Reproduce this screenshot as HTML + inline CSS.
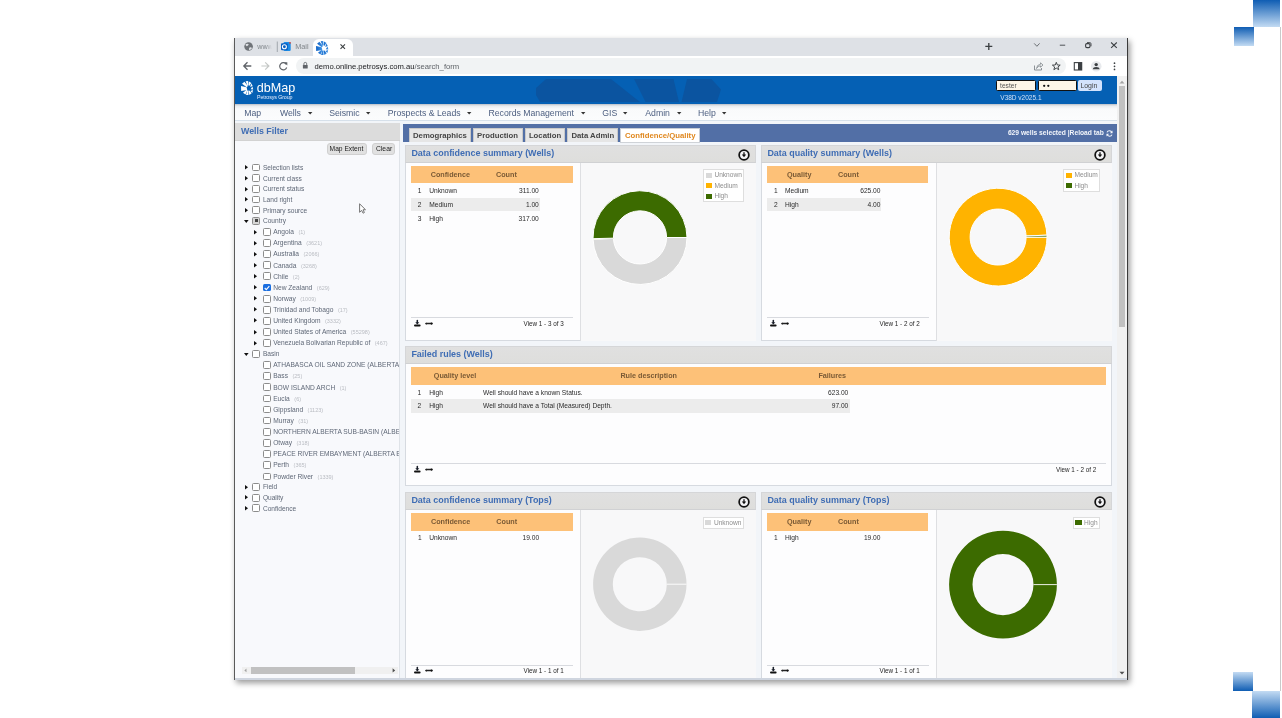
<!DOCTYPE html>
<html><head><meta charset="utf-8"><title>dbMap</title>
<style>
html,body{margin:0;padding:0;}
body{width:1282px;height:718px;overflow:hidden;position:relative;background:#fff;font-family:"Liberation Sans",sans-serif;}
.a{position:absolute;box-sizing:border-box;}
.t{white-space:nowrap;}
svg{position:absolute;overflow:visible;}
</style></head><body><div style="position:absolute;left:0;top:0;width:1282px;height:718px;overflow:hidden;will-change:transform;">

<div class="a" style="left:1253px;top:0px;width:27px;height:27px;background:linear-gradient(#0f5db3,#c3dbf3);"></div>
<div class="a" style="left:1234px;top:27px;width:20px;height:19px;background:linear-gradient(#0f5db3,#c3dbf3);"></div>
<div class="a" style="left:1233px;top:672px;width:20px;height:19px;background:linear-gradient(#c3dbf3,#0f5db3);"></div>
<div class="a" style="left:1252px;top:691px;width:28px;height:27px;background:linear-gradient(#c3dbf3,#0f5db3);"></div>
<div class="a" style="left:1280px;top:27px;width:1px;height:664px;background:#c9c9c9;"></div>
<div class="a" style="left:234px;top:38px;width:894px;height:642px;box-shadow:2px 3px 6px rgba(0,0,0,0.4);background:#f4f7fa;"></div>
<div class="a" style="left:235px;top:38px;width:892px;height:18px;background:#dee1e6;"></div>
<div class="a" style="left:313px;top:39px;width:40px;height:17px;background:#fff;border-radius:6px 6px 0 0;"></div>
<div class="a" style="left:235px;top:56px;width:892px;height:20px;background:#fff;"></div>
<div class="a" style="left:296px;top:57.7px;width:770px;height:15.9px;background:#f1f3f4;border-radius:8px;"></div>
<div class="a" style="left:234px;top:38px;width:1px;height:642px;background:#5a5a5a;"></div>
<div class="a" style="left:1127px;top:38px;width:1.3px;height:642px;background:#3a3a3a;"></div>
<div class="a" style="left:235px;top:76px;width:882px;height:28px;background:#0560b4;"></div>
<svg style="left:0;top:0" width="1282" height="718"><g fill="#0b54a0"><path d="M546 79 L611 79 L640 102 L540 102 L536 95 L536 88 Z"/><path d="M634 79 L673.5 79 L679 102 L645.5 102 Z"/><path d="M687 79 L711.5 79 L721 89.5 L717 102 L681.5 102 Z"/></g></svg>
<div class="a" style="left:235px;top:104px;width:882px;height:17px;background:linear-gradient(#b9bec6,#e9ecef 2px,#f9fafb 5px,#fbfcfd);border-bottom:1px solid #d6e0ea;"></div>
<div class="a" style="left:1117px;top:76px;width:10px;height:604px;background:#f1f1f1;"></div>
<div class="a" style="left:1119px;top:86px;width:6px;height:241px;background:#c1c1c1;"></div>
<svg style="left:0;top:0" width="1282" height="718"><circle cx="248.6" cy="46.5" r="4.3" fill="#6f7378"/><path d="M245.5 44.3 Q247.5 43.2 248.8 44.6 Q248.2 46 246.8 46.2 Q245.6 45.6 245.5 44.3Z M249.5 47.5 Q251.5 47 252 48.3 Q250.8 50.2 249 50 Q248.6 48.5 249.5 47.5Z" fill="#dfe1e5"/><rect x="276.8" y="41.5" width="0.9" height="10.5" fill="#9aa0a6"/><rect x="283.5" y="42" width="7.2" height="9" rx="1.2" fill="#1c8ce6"/><rect x="281" y="43.3" width="6.8" height="7" rx="1" fill="#0a5fc2"/><circle cx="284.4" cy="46.8" r="2" fill="none" stroke="#fff" stroke-width="1.1"/><circle cx="290" cy="42.8" r="0.9" fill="#e0463a"/><path d="M340.5 44.3 L345 48.8 M345 44.3 L340.5 48.8" stroke="#3c4043" stroke-width="1.1"/><path d="M985.3 46.4 L992.3 46.4 M988.8 42.9 L988.8 49.9" stroke="#3c4043" stroke-width="1.35"/><path d="M1034.2 43.4 L1036.9 46.3 L1039.6 43.4" fill="none" stroke="#5f6368" stroke-width="0.9"/><path d="M1059.8 45.2 L1065.2 45.2" stroke="#4f5358" stroke-width="1"/><rect x="1085.6" y="43.6" width="4.4" height="4" rx="1.3" fill="none" stroke="#3c4043" stroke-width="1.1"/><path d="M1087 42.6 L1089.8 42.6 Q1091 42.6 1091 43.8 L1091 46.3" fill="none" stroke="#3c4043" stroke-width="0.9"/><path d="M1111.1 42.5 L1116.8 47.8 M1116.8 42.5 L1111.1 47.8" stroke="#3c4043" stroke-width="1.05"/><path d="M251.3 66 L244 66 M247.5 62.3 L243.8 66 L247.5 69.7" fill="none" stroke="#5f6368" stroke-width="1.3"/><path d="M261.4 66 L268.7 66 M265.2 62.3 L268.9 66 L265.2 69.7" fill="none" stroke="#c4c7c5" stroke-width="1.2"/><path d="M286.3 64.3 A3.6 3.6 0 1 0 286.7 67.5" fill="none" stroke="#5f6368" stroke-width="1.2"/><path d="M284 62.2 L287.3 62.2 L287.3 65.5 Z" fill="#5f6368"/><rect x="302.9" y="64.9" width="4.8" height="3.7" rx="0.5" fill="#5f6368"/><path d="M303.9 65.1 L303.9 63.8 A1.4 1.4 0 0 1 306.7 63.8 L306.7 65.1" fill="none" stroke="#5f6368" stroke-width="0.85"/><path d="M1034.5 65.5 L1034.5 70 L1041.5 70 L1041.5 68" fill="none" stroke="#80868b" stroke-width="0.9"/><path d="M1036.5 68.5 Q1037 64.5 1040.5 64.3 L1040.5 62.8 L1043 65 L1040.5 67.2 L1040.5 65.8 Q1038 65.8 1036.5 68.5Z" fill="none" stroke="#80868b" stroke-width="0.8"/><path d="M1056.30 62.30 L1057.33 64.98 L1060.20 65.13 L1057.96 66.94 L1058.71 69.72 L1056.30 68.15 L1053.89 69.72 L1054.64 66.94 L1052.40 65.13 L1055.27 64.98 Z" fill="none" stroke="#3c4043" stroke-width="0.95" stroke-linejoin="round"/><rect x="1074.3" y="62.6" width="7.4" height="7.4" fill="none" stroke="#3c4043" stroke-width="1.1"/><rect x="1078" y="62.6" width="4" height="7.4" fill="#3c4043"/><circle cx="1096.2" cy="66.3" r="5.3" fill="#e8eaed"/><circle cx="1096.2" cy="64.6" r="1.7" fill="#3c4043"/><path d="M1092.8 69.3 Q1093.2 66.9 1096.2 66.9 Q1099.2 66.9 1099.6 69.3 Z" fill="#3c4043"/><circle cx="1114.5" cy="63.2" r="0.85" fill="#3c4043"/><circle cx="1114.5" cy="66.3" r="0.85" fill="#3c4043"/><circle cx="1114.5" cy="69.4" r="0.85" fill="#3c4043"/></svg>
<svg style="left:316.4px;top:41px" width="12.7" height="14" viewBox="0 0 14 14" preserveAspectRatio="none"><defs><linearGradient id="fg" x1="0" y1="0" x2="1" y2="0"><stop offset="0" stop-color="#0b5fc4"/><stop offset="1" stop-color="#4a9be8"/></linearGradient></defs><g fill="url(#fg)"><path d="M1.2 2.8 L3.8 0.8 L7.8 5 L6.3 6.2 Z"/><path d="M5.2 0.3 L8 0 L8.5 4.3 L7.2 4.5 Z"/><path d="M9 0.6 L11.6 1.9 L9.1 5.1 L8.6 4.6 Z"/><path d="M0 5.1 L6.3 6.2 L7 9.1 L0.2 10 Z"/><path d="M11.4 2.5 L13.1 4.9 L10.3 6.1 Z"/><path d="M12.8 5.6 L13.7 8.4 L10.8 8.2 Z"/><path d="M13.4 9 L12.7 11.9 L10.5 10 Z"/><path d="M11.9 12.3 L9.4 14 L8.2 9.8 L9.4 9.4 Z"/><path d="M8.4 14 L5.7 13.9 L7 9.4 L8.1 9.6 Z"/><path d="M5 13.6 L2.2 11.8 L6.3 8.8 L7.1 9.6 Z"/></g></svg>
<div class="a t " style="left:257.2px;top:42.00px;line-height:10px;font-size:7.2px;color:#80868b;-webkit-mask-image:linear-gradient(90deg,#000 60%,transparent);width:15px;overflow:hidden;">www</div>
<div class="a t " style="left:295.2px;top:41.80px;line-height:10px;font-size:7.3px;color:#80868b;">Mail</div>
<div class="a t " style="left:314.5px;top:61.60px;line-height:10px;font-size:7.66px;color:#333;"><span style="color:#202124">demo.online.petrosys.com.au</span><span style="color:#5f6368">/search_form</span></div>
<svg style="left:240.5px;top:80.6px" width="12.5" height="14" viewBox="0 0 14 14" preserveAspectRatio="none"><g fill="#fff"><path d="M1.2 2.8 L3.8 0.8 L7.8 5 L6.3 6.2 Z"/><path d="M5.2 0.3 L8 0 L8.5 4.3 L7.2 4.5 Z"/><path d="M9 0.6 L11.6 1.9 L9.1 5.1 L8.6 4.6 Z"/><path d="M0 5.1 L6.3 6.2 L7 9.1 L0.2 10 Z"/><path d="M11.4 2.5 L13.1 4.9 L10.3 6.1 Z"/><path d="M12.8 5.6 L13.7 8.4 L10.8 8.2 Z"/><path d="M13.4 9 L12.7 11.9 L10.5 10 Z"/><path d="M11.9 12.3 L9.4 14 L8.2 9.8 L9.4 9.4 Z"/><path d="M8.4 14 L5.7 13.9 L7 9.4 L8.1 9.6 Z"/><path d="M5 13.6 L2.2 11.8 L6.3 8.8 L7.1 9.6 Z"/></g></svg>
<div class="a t " style="left:256.8px;top:81.00px;line-height:14px;font-size:12.6px;color:#fff;">dbMap</div>
<div class="a t " style="left:257px;top:93.50px;line-height:6px;font-size:5.3px;color:#e6efff;letter-spacing:-0.1px;">Petrosys Group</div>
<div class="a" style="left:996px;top:80px;width:39.5px;height:11.3px;background:#fdf6e8;border:1px solid #111;border-radius:1.5px;"></div>
<div class="a" style="left:1038px;top:80px;width:38.7px;height:11.3px;background:#fdf6e8;border:1px solid #111;border-radius:1.5px;"></div>
<div class="a" style="left:1078px;top:80px;width:24.3px;height:11.4px;background:#d3e3fd;border-radius:2px;"></div>
<div class="a t " style="left:1000.1px;top:80.60px;line-height:10px;font-size:6.6px;color:#555;">tester</div>
<svg style="left:0;top:0" width="1282" height="718"><circle cx="1044.2" cy="85.8" r="1.15" fill="#111"/><circle cx="1048.3" cy="85.8" r="1.15" fill="#111"/></svg>
<div class="a t " style="left:1080.4px;top:81.00px;line-height:10px;font-size:6.9px;color:#444;">Login</div>
<div class="a t " style="left:1000.3px;top:94.00px;line-height:8px;font-size:6.5px;color:#cfe0f7;">V38D v2025.1</div>
<div class="a t " style="left:244.2px;top:106.60px;line-height:12px;font-size:8.7px;color:#4d5f80;">Map</div>
<div class="a t " style="left:279.9px;top:106.60px;line-height:12px;font-size:8.7px;color:#4d5f80;">Wells</div>
<svg style="left:307.5px;top:111.6px" width="5" height="3"><path d="M0 0 L4.4 0 L2.2 2.6 Z" fill="#333"/></svg>
<div class="a t " style="left:329.2px;top:106.60px;line-height:12px;font-size:8.7px;color:#4d5f80;">Seismic</div>
<svg style="left:366.40000000000003px;top:111.6px" width="5" height="3"><path d="M0 0 L4.4 0 L2.2 2.6 Z" fill="#333"/></svg>
<div class="a t " style="left:387.7px;top:106.60px;line-height:12px;font-size:8.7px;color:#4d5f80;">Prospects &amp; Leads</div>
<svg style="left:466.8px;top:111.6px" width="5" height="3"><path d="M0 0 L4.4 0 L2.2 2.6 Z" fill="#333"/></svg>
<div class="a t " style="left:488.5px;top:106.60px;line-height:12px;font-size:8.7px;color:#4d5f80;">Records Management</div>
<svg style="left:581.1999999999999px;top:111.6px" width="5" height="3"><path d="M0 0 L4.4 0 L2.2 2.6 Z" fill="#333"/></svg>
<div class="a t " style="left:602.3px;top:106.60px;line-height:12px;font-size:8.7px;color:#4d5f80;">GIS</div>
<svg style="left:623.4px;top:111.6px" width="5" height="3"><path d="M0 0 L4.4 0 L2.2 2.6 Z" fill="#333"/></svg>
<div class="a t " style="left:645.3px;top:106.60px;line-height:12px;font-size:8.7px;color:#4d5f80;">Admin</div>
<svg style="left:676.5999999999999px;top:111.6px" width="5" height="3"><path d="M0 0 L4.4 0 L2.2 2.6 Z" fill="#333"/></svg>
<div class="a t " style="left:698px;top:106.60px;line-height:12px;font-size:8.7px;color:#4d5f80;">Help</div>
<svg style="left:722.1999999999999px;top:111.6px" width="5" height="3"><path d="M0 0 L4.4 0 L2.2 2.6 Z" fill="#333"/></svg>
<div class="a" style="left:235px;top:121px;width:882px;height:559px;background:#f2f5f9;"></div>
<div class="a" style="left:235px;top:123px;width:165px;height:555px;background:#f8f9fc;border-right:1px solid #dfe3e8;"></div>
<div class="a" style="left:235px;top:123px;width:165px;height:18px;background:#dcdcdc;border-bottom:1px solid #d2d2d2;"></div>
<div class="a t " style="left:241px;top:125.20px;line-height:12px;font-size:8.84px;color:#3f6db4;font-weight:bold;">Wells Filter</div>
<div class="a" style="left:326.8px;top:143.4px;width:40px;height:11.3px;background:#e1e1e1;border:1px solid #d0d0d0;border-radius:3px;"></div>
<div class="a" style="left:372.3px;top:143.4px;width:22.5px;height:11.3px;background:#e1e1e1;border:1px solid #d0d0d0;border-radius:3px;"></div>
<div class="a t " style="left:329.6px;top:144.20px;line-height:10px;font-size:6.66px;color:#222;">Map Extent</div>
<div class="a t " style="left:376px;top:144.20px;line-height:10px;font-size:6.76px;color:#222;">Clear</div>
<svg style="left:244.60000000000002px;top:165.29999999999998px" width="4" height="5"><path d="M0 0 L3 2.3 L0 4.6 Z" fill="#111"/></svg>
<div class="a" style="left:252.4px;top:163.7px;width:7.8px;height:7.8px;background:#fff;border:1px solid #8c8c8c;border-radius:1.5px;"></div>
<div class="a t " style="left:262.9px;top:162.90px;line-height:10px;font-size:6.6px;color:#5f6877;">Selection lists</div>
<svg style="left:244.60000000000002px;top:176.0px" width="4" height="5"><path d="M0 0 L3 2.3 L0 4.6 Z" fill="#111"/></svg>
<div class="a" style="left:252.4px;top:174.4px;width:7.8px;height:7.8px;background:#fff;border:1px solid #8c8c8c;border-radius:1.5px;"></div>
<div class="a t " style="left:262.9px;top:173.60px;line-height:10px;font-size:6.6px;color:#5f6877;">Current class</div>
<svg style="left:244.60000000000002px;top:186.7px" width="4" height="5"><path d="M0 0 L3 2.3 L0 4.6 Z" fill="#111"/></svg>
<div class="a" style="left:252.4px;top:185.1px;width:7.8px;height:7.8px;background:#fff;border:1px solid #8c8c8c;border-radius:1.5px;"></div>
<div class="a t " style="left:262.9px;top:184.30px;line-height:10px;font-size:6.6px;color:#5f6877;">Current status</div>
<svg style="left:244.60000000000002px;top:197.29999999999998px" width="4" height="5"><path d="M0 0 L3 2.3 L0 4.6 Z" fill="#111"/></svg>
<div class="a" style="left:252.4px;top:195.7px;width:7.8px;height:7.8px;background:#fff;border:1px solid #8c8c8c;border-radius:1.5px;"></div>
<div class="a t " style="left:262.9px;top:194.90px;line-height:10px;font-size:6.6px;color:#5f6877;">Land right</div>
<svg style="left:244.60000000000002px;top:208.0px" width="4" height="5"><path d="M0 0 L3 2.3 L0 4.6 Z" fill="#111"/></svg>
<div class="a" style="left:252.4px;top:206.4px;width:7.8px;height:7.8px;background:#fff;border:1px solid #8c8c8c;border-radius:1.5px;"></div>
<div class="a t " style="left:262.9px;top:205.60px;line-height:10px;font-size:6.6px;color:#5f6877;">Primary source</div>
<svg style="left:244.2px;top:219.5px" width="6" height="4"><path d="M0 0 L4.6 0 L2.3 2.9 Z" fill="#111"/></svg>
<div class="a" style="left:252.4px;top:217.0px;width:7.8px;height:7.8px;background:#d6d6d6;border:1px solid #8c8c8c;border-radius:1.5px;"></div>
<div class="a" style="left:254.70000000000002px;top:219.3px;width:3.2px;height:3.2px;background:#444;"></div>
<div class="a t " style="left:262.9px;top:216.20px;line-height:10px;font-size:6.6px;color:#5f6877;">Country</div>
<svg style="left:253.9px;top:229.6px" width="4" height="5"><path d="M0 0 L3 2.3 L0 4.6 Z" fill="#111"/></svg>
<div class="a" style="left:263px;top:228.0px;width:7.8px;height:7.8px;background:#fff;border:1px solid #8c8c8c;border-radius:1.5px;"></div>
<div class="a t" style="left:273.2px;top:227.20px;line-height:10px;font-size:6.65px;color:#5f6877;">Angola<span style="font-size:5.5px;color:#b9bcc2;margin-left:4.5px">(1)</span></div>
<svg style="left:253.9px;top:240.6px" width="4" height="5"><path d="M0 0 L3 2.3 L0 4.6 Z" fill="#111"/></svg>
<div class="a" style="left:263px;top:239.0px;width:7.8px;height:7.8px;background:#fff;border:1px solid #8c8c8c;border-radius:1.5px;"></div>
<div class="a t" style="left:273.2px;top:238.20px;line-height:10px;font-size:6.65px;color:#5f6877;">Argentina<span style="font-size:5.5px;color:#b9bcc2;margin-left:4.5px">(3621)</span></div>
<svg style="left:253.9px;top:251.79999999999998px" width="4" height="5"><path d="M0 0 L3 2.3 L0 4.6 Z" fill="#111"/></svg>
<div class="a" style="left:263px;top:250.2px;width:7.8px;height:7.8px;background:#fff;border:1px solid #8c8c8c;border-radius:1.5px;"></div>
<div class="a t" style="left:273.2px;top:249.40px;line-height:10px;font-size:6.65px;color:#5f6877;">Australia<span style="font-size:5.5px;color:#b9bcc2;margin-left:4.5px">(2066)</span></div>
<svg style="left:253.9px;top:262.9px" width="4" height="5"><path d="M0 0 L3 2.3 L0 4.6 Z" fill="#111"/></svg>
<div class="a" style="left:263px;top:261.3px;width:7.8px;height:7.8px;background:#fff;border:1px solid #8c8c8c;border-radius:1.5px;"></div>
<div class="a t" style="left:273.2px;top:260.50px;line-height:10px;font-size:6.65px;color:#5f6877;">Canada<span style="font-size:5.5px;color:#b9bcc2;margin-left:4.5px">(3268)</span></div>
<svg style="left:253.9px;top:273.9px" width="4" height="5"><path d="M0 0 L3 2.3 L0 4.6 Z" fill="#111"/></svg>
<div class="a" style="left:263px;top:272.3px;width:7.8px;height:7.8px;background:#fff;border:1px solid #8c8c8c;border-radius:1.5px;"></div>
<div class="a t" style="left:273.2px;top:271.50px;line-height:10px;font-size:6.65px;color:#5f6877;">Chile<span style="font-size:5.5px;color:#b9bcc2;margin-left:4.5px">(2)</span></div>
<svg style="left:253.9px;top:285.2px" width="4" height="5"><path d="M0 0 L3 2.3 L0 4.6 Z" fill="#111"/></svg>
<div class="a" style="left:263px;top:283.6px;width:7.8px;height:7.8px;background:#1a6ee0;border-radius:1.5px;"></div>
<svg style="left:263px;top:283.6px" width="8" height="8"><path d="M1.7 4 L3.3 5.6 L6.3 2.2" fill="none" stroke="#fff" stroke-width="1.1"/></svg>
<div class="a t" style="left:273.2px;top:282.80px;line-height:10px;font-size:6.65px;color:#5f6877;">New Zealand<span style="font-size:5.5px;color:#b9bcc2;margin-left:4.5px">(629)</span></div>
<svg style="left:253.9px;top:296.4px" width="4" height="5"><path d="M0 0 L3 2.3 L0 4.6 Z" fill="#111"/></svg>
<div class="a" style="left:263px;top:294.8px;width:7.8px;height:7.8px;background:#fff;border:1px solid #8c8c8c;border-radius:1.5px;"></div>
<div class="a t" style="left:273.2px;top:294.00px;line-height:10px;font-size:6.65px;color:#5f6877;">Norway<span style="font-size:5.5px;color:#b9bcc2;margin-left:4.5px">(1009)</span></div>
<svg style="left:253.9px;top:307.4px" width="4" height="5"><path d="M0 0 L3 2.3 L0 4.6 Z" fill="#111"/></svg>
<div class="a" style="left:263px;top:305.8px;width:7.8px;height:7.8px;background:#fff;border:1px solid #8c8c8c;border-radius:1.5px;"></div>
<div class="a t" style="left:273.2px;top:305.00px;line-height:10px;font-size:6.65px;color:#5f6877;">Trinidad and Tobago<span style="font-size:5.5px;color:#b9bcc2;margin-left:4.5px">(17)</span></div>
<svg style="left:253.9px;top:318.4px" width="4" height="5"><path d="M0 0 L3 2.3 L0 4.6 Z" fill="#111"/></svg>
<div class="a" style="left:263px;top:316.8px;width:7.8px;height:7.8px;background:#fff;border:1px solid #8c8c8c;border-radius:1.5px;"></div>
<div class="a t" style="left:273.2px;top:316.00px;line-height:10px;font-size:6.65px;color:#5f6877;">United Kingdom<span style="font-size:5.5px;color:#b9bcc2;margin-left:4.5px">(3332)</span></div>
<svg style="left:253.9px;top:329.59999999999997px" width="4" height="5"><path d="M0 0 L3 2.3 L0 4.6 Z" fill="#111"/></svg>
<div class="a" style="left:263px;top:328.0px;width:7.8px;height:7.8px;background:#fff;border:1px solid #8c8c8c;border-radius:1.5px;"></div>
<div class="a t" style="left:273.2px;top:327.20px;line-height:10px;font-size:6.65px;color:#5f6877;">United States of America<span style="font-size:5.5px;color:#b9bcc2;margin-left:4.5px">(55298)</span></div>
<svg style="left:253.9px;top:340.8px" width="4" height="5"><path d="M0 0 L3 2.3 L0 4.6 Z" fill="#111"/></svg>
<div class="a" style="left:263px;top:339.20000000000005px;width:7.8px;height:7.8px;background:#fff;border:1px solid #8c8c8c;border-radius:1.5px;"></div>
<div class="a t" style="left:273.2px;top:338.40px;line-height:10px;font-size:6.65px;color:#5f6877;">Venezuela Bolivarian Republic of<span style="font-size:5.5px;color:#b9bcc2;margin-left:4.5px">(467)</span></div>
<svg style="left:244.2px;top:352.6px" width="6" height="4"><path d="M0 0 L4.6 0 L2.3 2.9 Z" fill="#111"/></svg>
<div class="a" style="left:252.4px;top:350.1px;width:7.8px;height:7.8px;background:#fff;border:1px solid #8c8c8c;border-radius:1.5px;"></div>
<div class="a t " style="left:262.9px;top:349.30px;line-height:10px;font-size:6.6px;color:#5f6877;">Basin</div>
<div class="a" style="left:235px;top:355px;width:164px;height:130px;overflow:hidden;">
<div class="a" style="left:28px;top:6.10px;width:7.8px;height:7.8px;background:#fff;border:1px solid #8c8c8c;border-radius:1.5px;"></div>
<div class="a t" style="left:38.2px;top:5.30px;line-height:10px;font-size:6.65px;color:#5f6877;">ATHABASCA OIL SAND ZONE (ALBERTA BASIN)</div>
<div class="a" style="left:28px;top:17.10px;width:7.8px;height:7.8px;background:#fff;border:1px solid #8c8c8c;border-radius:1.5px;"></div>
<div class="a t" style="left:38.2px;top:16.30px;line-height:10px;font-size:6.65px;color:#5f6877;">Bass<span style="font-size:5.5px;color:#b9bcc2;margin-left:4.5px">(25)</span></div>
<div class="a" style="left:28px;top:28.40px;width:7.8px;height:7.8px;background:#fff;border:1px solid #8c8c8c;border-radius:1.5px;"></div>
<div class="a t" style="left:38.2px;top:27.60px;line-height:10px;font-size:6.65px;color:#5f6877;">BOW ISLAND ARCH<span style="font-size:5.5px;color:#b9bcc2;margin-left:4.5px">(1)</span></div>
<div class="a" style="left:28px;top:39.60px;width:7.8px;height:7.8px;background:#fff;border:1px solid #8c8c8c;border-radius:1.5px;"></div>
<div class="a t" style="left:38.2px;top:38.80px;line-height:10px;font-size:6.65px;color:#5f6877;">Eucla<span style="font-size:5.5px;color:#b9bcc2;margin-left:4.5px">(6)</span></div>
<div class="a" style="left:28px;top:50.60px;width:7.8px;height:7.8px;background:#fff;border:1px solid #8c8c8c;border-radius:1.5px;"></div>
<div class="a t" style="left:38.2px;top:49.80px;line-height:10px;font-size:6.65px;color:#5f6877;">Gippsland<span style="font-size:5.5px;color:#b9bcc2;margin-left:4.5px">(1123)</span></div>
<div class="a" style="left:28px;top:61.70px;width:7.8px;height:7.8px;background:#fff;border:1px solid #8c8c8c;border-radius:1.5px;"></div>
<div class="a t" style="left:38.2px;top:60.90px;line-height:10px;font-size:6.65px;color:#5f6877;">Murray<span style="font-size:5.5px;color:#b9bcc2;margin-left:4.5px">(31)</span></div>
<div class="a" style="left:28px;top:72.90px;width:7.8px;height:7.8px;background:#fff;border:1px solid #8c8c8c;border-radius:1.5px;"></div>
<div class="a t" style="left:38.2px;top:72.10px;line-height:10px;font-size:6.65px;color:#5f6877;">NORTHERN ALBERTA SUB-BASIN (ALBERTA BASIN)</div>
<div class="a" style="left:28px;top:83.80px;width:7.8px;height:7.8px;background:#fff;border:1px solid #8c8c8c;border-radius:1.5px;"></div>
<div class="a t" style="left:38.2px;top:83.00px;line-height:10px;font-size:6.65px;color:#5f6877;">Otway<span style="font-size:5.5px;color:#b9bcc2;margin-left:4.5px">(318)</span></div>
<div class="a" style="left:28px;top:94.90px;width:7.8px;height:7.8px;background:#fff;border:1px solid #8c8c8c;border-radius:1.5px;"></div>
<div class="a t" style="left:38.2px;top:94.10px;line-height:10px;font-size:6.65px;color:#5f6877;">PEACE RIVER EMBAYMENT (ALBERTA BASIN)</div>
<div class="a" style="left:28px;top:106.10px;width:7.8px;height:7.8px;background:#fff;border:1px solid #8c8c8c;border-radius:1.5px;"></div>
<div class="a t" style="left:38.2px;top:105.30px;line-height:10px;font-size:6.65px;color:#5f6877;">Perth<span style="font-size:5.5px;color:#b9bcc2;margin-left:4.5px">(365)</span></div>
<div class="a" style="left:28px;top:117.50px;width:7.8px;height:7.8px;background:#fff;border:1px solid #8c8c8c;border-radius:1.5px;"></div>
<div class="a t" style="left:38.2px;top:116.70px;line-height:10px;font-size:6.65px;color:#5f6877;">Powder River<span style="font-size:5.5px;color:#b9bcc2;margin-left:4.5px">(1339)</span></div>
</div>
<svg style="left:244.60000000000002px;top:484.8px" width="4" height="5"><path d="M0 0 L3 2.3 L0 4.6 Z" fill="#111"/></svg>
<div class="a" style="left:252.4px;top:483.20000000000005px;width:7.8px;height:7.8px;background:#fff;border:1px solid #8c8c8c;border-radius:1.5px;"></div>
<div class="a t " style="left:262.9px;top:482.40px;line-height:10px;font-size:6.6px;color:#5f6877;">Field</div>
<svg style="left:244.60000000000002px;top:495.4px" width="4" height="5"><path d="M0 0 L3 2.3 L0 4.6 Z" fill="#111"/></svg>
<div class="a" style="left:252.4px;top:493.8px;width:7.8px;height:7.8px;background:#fff;border:1px solid #8c8c8c;border-radius:1.5px;"></div>
<div class="a t " style="left:262.9px;top:493.00px;line-height:10px;font-size:6.6px;color:#5f6877;">Quality</div>
<svg style="left:244.60000000000002px;top:505.9px" width="4" height="5"><path d="M0 0 L3 2.3 L0 4.6 Z" fill="#111"/></svg>
<div class="a" style="left:252.4px;top:504.3px;width:7.8px;height:7.8px;background:#fff;border:1px solid #8c8c8c;border-radius:1.5px;"></div>
<div class="a t " style="left:262.9px;top:503.50px;line-height:10px;font-size:6.6px;color:#5f6877;">Confidence</div>
<div class="a" style="left:242px;top:667px;width:156px;height:7px;background:#f0f0f0;"></div>
<div class="a" style="left:250.5px;top:667px;width:104.5px;height:6.8px;background:#c1c1c1;"></div>
<svg style="left:0;top:0" width="1282" height="718"><path d="M246.5 668.6 L244.3 670.4 L246.5 672.2Z" fill="#a3a3a3"/><path d="M392.6 668.3 L395.2 670.4 L392.6 672.5Z" fill="#505050"/></svg>
<div class="a" style="left:403px;top:124px;width:714px;height:17.6px;background:#526fa6;"></div>
<div class="a" style="left:408.9px;top:127.5px;width:62.30000000000001px;height:14.1px;background:#e6e6e6;border:1px solid #c9c9c9;border-bottom:none;"></div>
<div class="a t " style="left:413.0px;top:130.50px;line-height:10px;font-size:7.75px;color:#454545;font-weight:bold;">Demographics</div>
<div class="a" style="left:472.9px;top:127.5px;width:50.10000000000002px;height:14.1px;background:#e6e6e6;border:1px solid #c9c9c9;border-bottom:none;"></div>
<div class="a t " style="left:477.0px;top:130.50px;line-height:10px;font-size:7.75px;color:#454545;font-weight:bold;">Production</div>
<div class="a" style="left:524.8px;top:127.5px;width:40.5px;height:14.1px;background:#e6e6e6;border:1px solid #c9c9c9;border-bottom:none;"></div>
<div class="a t " style="left:528.9px;top:130.50px;line-height:10px;font-size:7.75px;color:#454545;font-weight:bold;">Location</div>
<div class="a" style="left:567.3px;top:127.5px;width:51.200000000000045px;height:14.1px;background:#e6e6e6;border:1px solid #c9c9c9;border-bottom:none;"></div>
<div class="a t " style="left:571.4px;top:130.50px;line-height:10px;font-size:7.75px;color:#454545;font-weight:bold;">Data Admin</div>
<div class="a" style="left:620.2px;top:127.5px;width:79.79999999999995px;height:15px;background:#fff;border:1px solid #c8cdd5;border-bottom:1px solid #cfd3d8;"></div>
<div class="a t " style="left:624.9000000000001px;top:130.50px;line-height:10px;font-size:7.75px;color:#e0881f;font-weight:bold;">Confidence/Quality</div>
<div class="a t" style="right:178.20px;top:127.70px;line-height:10px;font-size:6.7px;color:#f3f6fb;font-weight:bold;text-align:right;">629 wells selected |Reload tab</div>
<svg style="left:1105.5px;top:129.5px" width="7" height="7" viewBox="0 0 7 7"><path d="M5.9 2.6 A2.6 2.6 0 0 0 1 2.4" fill="none" stroke="#f3f6fb" stroke-width="1.1"/><path d="M1.1 4.4 A2.6 2.6 0 0 0 6 4.6" fill="none" stroke="#f3f6fb" stroke-width="1.1"/><path d="M6.5 0.6 L6.5 3.3 L3.9 3.3Z" fill="#f3f6fb"/><path d="M0.5 6.4 L0.5 3.7 L3.1 3.7Z" fill="#f3f6fb"/></svg>
<div class="a" style="left:405px;top:145px;width:351px;height:196px;background:#fdfdfe;border:1px solid #d6dae0;"></div>
<div class="a" style="left:405px;top:145px;width:351px;height:17.5px;background:linear-gradient(#e0e0e0,#dededc);border:1px solid #d5d6d8;border-bottom:1px solid #d0d1d3;"></div>
<div class="a t " style="left:411.4px;top:147.30px;line-height:12px;font-size:8.95px;color:#3f6db4;font-weight:bold;">Data confidence summary (Wells)</div>
<svg style="left:737.8px;top:149px" width="12" height="12" viewBox="0 0 12 12"><circle cx="6" cy="6" r="4.85" fill="#f4f4f6" stroke="#111" stroke-width="1.75"/><path d="M6 3.2 L6 6.2" stroke="#111" stroke-width="1.3"/><path d="M3.8 5.6 L8.2 5.6 L6 8.2Z" fill="#111"/></svg>
<div class="a" style="left:411px;top:165.6px;width:161.5px;height:17.599999999999994px;background:#fdc178;"></div>
<div class="a t " style="left:430.7px;top:169.90px;line-height:10px;font-size:7.22px;color:#7a5a35;font-weight:bold;">Confidence</div>
<div class="a t " style="left:496px;top:169.90px;line-height:10px;font-size:7.22px;color:#7a5a35;font-weight:bold;">Count</div>
<div class="a" style="left:411px;top:197.5px;width:129px;height:13.5px;background:#ececec;"></div>
<div class="a t" style="right:860.50px;top:185.90px;line-height:10px;font-size:6.65px;color:#2a2a2a;text-align:right;">1</div>
<div class="a t " style="left:429.3px;top:185.90px;line-height:10px;font-size:6.65px;color:#2a2a2a;">Unknown</div>
<div class="a t" style="right:743.20px;top:185.90px;line-height:10px;font-size:6.65px;color:#2a2a2a;text-align:right;">311.00</div>
<div class="a t" style="right:860.50px;top:199.80px;line-height:10px;font-size:6.65px;color:#2a2a2a;text-align:right;">2</div>
<div class="a t " style="left:429.3px;top:199.80px;line-height:10px;font-size:6.65px;color:#2a2a2a;">Medium</div>
<div class="a t" style="right:743.20px;top:199.80px;line-height:10px;font-size:6.65px;color:#2a2a2a;text-align:right;">1.00</div>
<div class="a t" style="right:860.50px;top:213.50px;line-height:10px;font-size:6.65px;color:#2a2a2a;text-align:right;">3</div>
<div class="a t " style="left:429.3px;top:213.50px;line-height:10px;font-size:6.65px;color:#2a2a2a;">High</div>
<div class="a t" style="right:743.20px;top:213.50px;line-height:10px;font-size:6.65px;color:#2a2a2a;text-align:right;">317.00</div>
<div class="a" style="left:411px;top:316.5px;width:162px;height:1px;background:#d8dadf;"></div>
<svg style="left:411px;top:319.6px" width="24" height="8" viewBox="0 0 24 8"><path d="M6.3 0.5 L6.3 2.8" stroke="#1a1f2a" stroke-width="1.5" stroke-linecap="round"/><path d="M4.3 2.3 L8.3 2.3 L6.3 4.6Z" fill="#1a1f2a"/><rect x="3" y="4.4" width="6.6" height="2" rx="1" fill="#111"/><path d="M15.1 3.6 L20.8 3.6" stroke="#222" stroke-width="1.5" stroke-linecap="round"/><circle cx="20.6" cy="3.6" r="1.1" fill="#111"/><circle cx="15.3" cy="3.6" r="0.9" fill="#222"/></svg>
<div class="a t" style="right:718.30px;top:318.90px;line-height:10px;font-size:6.3px;color:#262626;text-align:right;">View 1 - 3 of 3</div>
<div class="a" style="left:580px;top:162.5px;width:175.5px;height:178px;background:#f8f8f9;border-left:1px solid #dedfe2;"></div>
<div class="a" style="left:761px;top:145px;width:351px;height:196px;background:#fdfdfe;border:1px solid #d6dae0;"></div>
<div class="a" style="left:761px;top:145px;width:351px;height:17.5px;background:linear-gradient(#e0e0e0,#dededc);border:1px solid #d5d6d8;border-bottom:1px solid #d0d1d3;"></div>
<div class="a t " style="left:767.4px;top:147.30px;line-height:12px;font-size:8.95px;color:#3f6db4;font-weight:bold;">Data quality summary (Wells)</div>
<svg style="left:1093.8px;top:149px" width="12" height="12" viewBox="0 0 12 12"><circle cx="6" cy="6" r="4.85" fill="#f4f4f6" stroke="#111" stroke-width="1.75"/><path d="M6 3.2 L6 6.2" stroke="#111" stroke-width="1.3"/><path d="M3.8 5.6 L8.2 5.6 L6 8.2Z" fill="#111"/></svg>
<div class="a" style="left:767.3px;top:165.6px;width:161.20000000000005px;height:17.599999999999994px;background:#fdc178;"></div>
<div class="a t " style="left:787px;top:169.90px;line-height:10px;font-size:7.22px;color:#7a5a35;font-weight:bold;">Quality</div>
<div class="a t " style="left:838px;top:169.90px;line-height:10px;font-size:7.22px;color:#7a5a35;font-weight:bold;">Count</div>
<div class="a" style="left:767.3px;top:197.5px;width:114px;height:13.5px;background:#ececec;"></div>
<div class="a t" style="right:504.20px;top:185.90px;line-height:10px;font-size:6.65px;color:#2a2a2a;text-align:right;">1</div>
<div class="a t " style="left:785px;top:185.90px;line-height:10px;font-size:6.65px;color:#2a2a2a;">Medium</div>
<div class="a t" style="right:401.50px;top:185.90px;line-height:10px;font-size:6.65px;color:#2a2a2a;text-align:right;">625.00</div>
<div class="a t" style="right:504.20px;top:199.80px;line-height:10px;font-size:6.65px;color:#2a2a2a;text-align:right;">2</div>
<div class="a t " style="left:785px;top:199.80px;line-height:10px;font-size:6.65px;color:#2a2a2a;">High</div>
<div class="a t" style="right:401.50px;top:199.80px;line-height:10px;font-size:6.65px;color:#2a2a2a;text-align:right;">4.00</div>
<div class="a" style="left:767.3px;top:316.5px;width:161.70000000000005px;height:1px;background:#d8dadf;"></div>
<svg style="left:767.3px;top:319.6px" width="24" height="8" viewBox="0 0 24 8"><path d="M6.3 0.5 L6.3 2.8" stroke="#1a1f2a" stroke-width="1.5" stroke-linecap="round"/><path d="M4.3 2.3 L8.3 2.3 L6.3 4.6Z" fill="#1a1f2a"/><rect x="3" y="4.4" width="6.6" height="2" rx="1" fill="#111"/><path d="M15.1 3.6 L20.8 3.6" stroke="#222" stroke-width="1.5" stroke-linecap="round"/><circle cx="20.6" cy="3.6" r="1.1" fill="#111"/><circle cx="15.3" cy="3.6" r="0.9" fill="#222"/></svg>
<div class="a t" style="right:362.30px;top:318.90px;line-height:10px;font-size:6.3px;color:#262626;text-align:right;">View 1 - 2 of 2</div>
<div class="a" style="left:936px;top:162.5px;width:175.5px;height:178px;background:#f8f8f9;border-left:1px solid #dedfe2;"></div>
<div class="a" style="left:405px;top:346px;width:707px;height:140px;background:#fdfdfe;border:1px solid #d6dae0;"></div>
<div class="a" style="left:405px;top:346px;width:707px;height:17.5px;background:linear-gradient(#e0e0e0,#dededc);border:1px solid #d5d6d8;border-bottom:1px solid #d0d1d3;"></div>
<div class="a t " style="left:411.4px;top:348.30px;line-height:12px;font-size:8.95px;color:#3f6db4;font-weight:bold;">Failed rules (Wells)</div>
<div class="a" style="left:411px;top:367px;width:694.5px;height:18px;background:#fdc178;"></div>
<div class="a t " style="left:433.8px;top:371.20px;line-height:10px;font-size:7.22px;color:#7a5a35;font-weight:bold;">Quality level</div>
<div class="a t " style="left:620.4px;top:371.20px;line-height:10px;font-size:7.22px;color:#7a5a35;font-weight:bold;">Rule description</div>
<div class="a t " style="left:818.4px;top:371.20px;line-height:10px;font-size:7.22px;color:#7a5a35;font-weight:bold;">Failures</div>
<div class="a" style="left:411px;top:399.2px;width:438.6px;height:13.4px;background:#ececec;"></div>
<div class="a t" style="right:860.70px;top:387.60px;line-height:10px;font-size:6.65px;color:#2a2a2a;text-align:right;">1</div>
<div class="a t " style="left:429.2px;top:387.60px;line-height:10px;font-size:6.65px;color:#2a2a2a;">High</div>
<div class="a t " style="left:483px;top:387.60px;line-height:10px;font-size:6.65px;color:#2a2a2a;">Well should have a known Status.</div>
<div class="a t" style="right:433.70px;top:387.60px;line-height:10px;font-size:6.65px;color:#2a2a2a;text-align:right;">623.00</div>
<div class="a t" style="right:860.70px;top:401.20px;line-height:10px;font-size:6.65px;color:#2a2a2a;text-align:right;">2</div>
<div class="a t " style="left:429.2px;top:401.20px;line-height:10px;font-size:6.65px;color:#2a2a2a;">High</div>
<div class="a t " style="left:483px;top:401.20px;line-height:10px;font-size:6.65px;color:#2a2a2a;">Well should have a Total (Measured) Depth.</div>
<div class="a t" style="right:433.70px;top:401.20px;line-height:10px;font-size:6.65px;color:#2a2a2a;text-align:right;">97.00</div>
<div class="a" style="left:411px;top:462.5px;width:694.5px;height:1px;background:#d8dadf;"></div>
<svg style="left:411px;top:465.5px" width="24" height="8" viewBox="0 0 24 8"><path d="M6.3 0.5 L6.3 2.8" stroke="#1a1f2a" stroke-width="1.5" stroke-linecap="round"/><path d="M4.3 2.3 L8.3 2.3 L6.3 4.6Z" fill="#1a1f2a"/><rect x="3" y="4.4" width="6.6" height="2" rx="1" fill="#111"/><path d="M15.1 3.6 L20.8 3.6" stroke="#222" stroke-width="1.5" stroke-linecap="round"/><circle cx="20.6" cy="3.6" r="1.1" fill="#111"/><circle cx="15.3" cy="3.6" r="0.9" fill="#222"/></svg>
<div class="a t" style="right:185.80px;top:464.80px;line-height:10px;font-size:6.3px;color:#262626;text-align:right;">View 1 - 2 of 2</div>
<div class="a" style="left:405px;top:492px;width:351px;height:188px;background:#fdfdfe;border:1px solid #d6dae0;"></div>
<div class="a" style="left:405px;top:492px;width:351px;height:17.5px;background:linear-gradient(#e0e0e0,#dededc);border:1px solid #d5d6d8;border-bottom:1px solid #d0d1d3;"></div>
<div class="a t " style="left:411.4px;top:494.30px;line-height:12px;font-size:8.95px;color:#3f6db4;font-weight:bold;">Data confidence summary (Tops)</div>
<svg style="left:737.8px;top:496px" width="12" height="12" viewBox="0 0 12 12"><circle cx="6" cy="6" r="4.85" fill="#f4f4f6" stroke="#111" stroke-width="1.75"/><path d="M6 3.2 L6 6.2" stroke="#111" stroke-width="1.3"/><path d="M3.8 5.6 L8.2 5.6 L6 8.2Z" fill="#111"/></svg>
<div class="a" style="left:411px;top:513px;width:161.79999999999995px;height:17.799999999999955px;background:#fdc178;"></div>
<div class="a t " style="left:431px;top:517.20px;line-height:10px;font-size:7.22px;color:#7a5a35;font-weight:bold;">Confidence</div>
<div class="a t " style="left:496.3px;top:517.20px;line-height:10px;font-size:7.22px;color:#7a5a35;font-weight:bold;">Count</div>
<div class="a t" style="right:860.20px;top:533.30px;line-height:10px;font-size:6.65px;color:#2a2a2a;text-align:right;">1</div>
<div class="a t " style="left:429.2px;top:533.30px;line-height:10px;font-size:6.65px;color:#2a2a2a;">Unknown</div>
<div class="a t" style="right:742.90px;top:533.30px;line-height:10px;font-size:6.65px;color:#2a2a2a;text-align:right;">19.00</div>
<div class="a" style="left:411px;top:664.5px;width:162px;height:1px;background:#d8dadf;"></div>
<svg style="left:411px;top:666.9px" width="24" height="8" viewBox="0 0 24 8"><path d="M6.3 0.5 L6.3 2.8" stroke="#1a1f2a" stroke-width="1.5" stroke-linecap="round"/><path d="M4.3 2.3 L8.3 2.3 L6.3 4.6Z" fill="#1a1f2a"/><rect x="3" y="4.4" width="6.6" height="2" rx="1" fill="#111"/><path d="M15.1 3.6 L20.8 3.6" stroke="#222" stroke-width="1.5" stroke-linecap="round"/><circle cx="20.6" cy="3.6" r="1.1" fill="#111"/><circle cx="15.3" cy="3.6" r="0.9" fill="#222"/></svg>
<div class="a t" style="right:718.30px;top:666.20px;line-height:10px;font-size:6.3px;color:#262626;text-align:right;">View 1 - 1 of 1</div>
<div class="a" style="left:580px;top:509.5px;width:175.5px;height:168.5px;background:#f8f8f9;border-left:1px solid #dedfe2;"></div>
<div class="a" style="left:761px;top:492px;width:351px;height:188px;background:#fdfdfe;border:1px solid #d6dae0;"></div>
<div class="a" style="left:761px;top:492px;width:351px;height:17.5px;background:linear-gradient(#e0e0e0,#dededc);border:1px solid #d5d6d8;border-bottom:1px solid #d0d1d3;"></div>
<div class="a t " style="left:767.4px;top:494.30px;line-height:12px;font-size:8.95px;color:#3f6db4;font-weight:bold;">Data quality summary (Tops)</div>
<svg style="left:1093.8px;top:496px" width="12" height="12" viewBox="0 0 12 12"><circle cx="6" cy="6" r="4.85" fill="#f4f4f6" stroke="#111" stroke-width="1.75"/><path d="M6 3.2 L6 6.2" stroke="#111" stroke-width="1.3"/><path d="M3.8 5.6 L8.2 5.6 L6 8.2Z" fill="#111"/></svg>
<div class="a" style="left:767.3px;top:513px;width:161.20000000000005px;height:17.799999999999955px;background:#fdc178;"></div>
<div class="a t " style="left:787px;top:517.20px;line-height:10px;font-size:7.22px;color:#7a5a35;font-weight:bold;">Quality</div>
<div class="a t " style="left:838px;top:517.20px;line-height:10px;font-size:7.22px;color:#7a5a35;font-weight:bold;">Count</div>
<div class="a t" style="right:504.20px;top:533.30px;line-height:10px;font-size:6.65px;color:#2a2a2a;text-align:right;">1</div>
<div class="a t " style="left:785px;top:533.30px;line-height:10px;font-size:6.65px;color:#2a2a2a;">High</div>
<div class="a t" style="right:401.50px;top:533.30px;line-height:10px;font-size:6.65px;color:#2a2a2a;text-align:right;">19.00</div>
<div class="a" style="left:767.3px;top:664.5px;width:161.70000000000005px;height:1px;background:#d8dadf;"></div>
<svg style="left:767.3px;top:666.9px" width="24" height="8" viewBox="0 0 24 8"><path d="M6.3 0.5 L6.3 2.8" stroke="#1a1f2a" stroke-width="1.5" stroke-linecap="round"/><path d="M4.3 2.3 L8.3 2.3 L6.3 4.6Z" fill="#1a1f2a"/><rect x="3" y="4.4" width="6.6" height="2" rx="1" fill="#111"/><path d="M15.1 3.6 L20.8 3.6" stroke="#222" stroke-width="1.5" stroke-linecap="round"/><circle cx="20.6" cy="3.6" r="1.1" fill="#111"/><circle cx="15.3" cy="3.6" r="0.9" fill="#222"/></svg>
<div class="a t" style="right:362.30px;top:666.20px;line-height:10px;font-size:6.3px;color:#262626;text-align:right;">View 1 - 1 of 1</div>
<div class="a" style="left:936px;top:509.5px;width:175.5px;height:168.5px;background:#f8f8f9;border-left:1px solid #dedfe2;"></div>
<svg style="left:0;top:0" width="1282" height="718"><path d="M687.00 237.50 A47 47 0 0 1 593.03 239.14 L613.42 238.43 A26.6 26.6 0 0 0 666.60 237.50 Z" fill="#d9d9d9" stroke="#fff" stroke-width="1"/><path d="M593.03 239.14 A47 47 0 0 1 593.01 238.67 L613.41 238.16 A26.6 26.6 0 0 0 613.42 238.43 Z" fill="#ffb300" stroke="#fff" stroke-width="1"/><path d="M593.01 238.67 A47 47 0 1 1 687.00 237.50 L666.60 237.50 A26.6 26.6 0 1 0 613.41 238.16 Z" fill="#3c6b00" stroke="#fff" stroke-width="1"/></svg>
<svg style="left:0;top:0" width="1282" height="718"><path d="M1047.00 237.10 A48.9 48.9 0 1 1 1046.96 235.15 L1026.08 235.98 A28 28 0 1 0 1026.10 237.10 Z" fill="#ffb300" stroke="#fff" stroke-width="1"/><path d="M1046.96 235.15 A48.9 48.9 0 0 1 1047.00 237.10 L1026.10 237.10 A28 28 0 0 0 1026.08 235.98 Z" fill="#3c6b00" stroke="#fff" stroke-width="1"/></svg>
<svg style="left:0;top:0" width="1282" height="718"><path fill-rule="evenodd" d="M686.50 584.2 A46.7 46.7 0 1 1 593.10 584.2 A46.7 46.7 0 1 1 686.50 584.2 Z M666.80 584.2 A27 27 0 1 0 612.80 584.2 A27 27 0 1 0 666.80 584.2 Z" fill="#d9d9d9"/><path d="M666.80 584.2 L686.50 584.2" stroke="#fff" stroke-width="0.9"/></svg>
<svg style="left:0;top:0" width="1282" height="718"><path fill-rule="evenodd" d="M1056.90 584.6 A53.9 53.9 0 1 1 949.10 584.6 A53.9 53.9 0 1 1 1056.90 584.6 Z M1033.50 584.6 A30.5 30.5 0 1 0 972.50 584.6 A30.5 30.5 0 1 0 1033.50 584.6 Z" fill="#3c6b00"/><path d="M1033.50 584.6 L1056.90 584.6" stroke="#fff" stroke-width="0.9"/></svg>
<div class="a" style="left:703.3px;top:169.3px;width:40.40000000000009px;height:32.69999999999999px;background:#fff;border:1px solid #dedede;"></div>
<div class="a" style="left:705.5px;top:172.5px;width:6.4px;height:5.3px;background:#d9d9d9;"></div>
<div class="a t " style="left:714.4px;top:170.20px;line-height:10px;font-size:6.6px;color:#8e8e8e;">Unknown</div>
<div class="a" style="left:705.5px;top:183.1px;width:6.4px;height:5.3px;background:#ffb300;"></div>
<div class="a t " style="left:714.4px;top:180.80px;line-height:10px;font-size:6.6px;color:#8e8e8e;">Medium</div>
<div class="a" style="left:705.5px;top:193.7px;width:6.4px;height:5.3px;background:#3c6b00;"></div>
<div class="a t " style="left:714.4px;top:191.40px;line-height:10px;font-size:6.6px;color:#8e8e8e;">High</div>
<div class="a" style="left:1063.3px;top:169.4px;width:36.5px;height:22.19999999999999px;background:#fff;border:1px solid #dedede;"></div>
<div class="a" style="left:1065.5px;top:172.6px;width:6.4px;height:5.3px;background:#ffb300;"></div>
<div class="a t " style="left:1074.3999999999999px;top:170.30px;line-height:10px;font-size:6.6px;color:#8e8e8e;">Medium</div>
<div class="a" style="left:1065.5px;top:183.2px;width:6.4px;height:5.3px;background:#3c6b00;"></div>
<div class="a t " style="left:1074.3999999999999px;top:180.90px;line-height:10px;font-size:6.6px;color:#8e8e8e;">High</div>
<div class="a" style="left:702.8px;top:517px;width:41.40000000000009px;height:11.799999999999955px;background:#fff;border:1px solid #dedede;"></div>
<div class="a" style="left:705.0px;top:520.2px;width:6.4px;height:5.3px;background:#d9d9d9;"></div>
<div class="a t " style="left:713.9px;top:517.90px;line-height:10px;font-size:6.6px;color:#8e8e8e;">Unknown</div>
<div class="a" style="left:1073px;top:517px;width:27px;height:11.799999999999955px;background:#fff;border:1px solid #dedede;"></div>
<div class="a" style="left:1075.2px;top:520.2px;width:6.4px;height:5.3px;background:#3c6b00;"></div>
<div class="a t " style="left:1084.1px;top:517.90px;line-height:10px;font-size:6.6px;color:#8e8e8e;">High</div>
<div class="a" style="left:235px;top:678px;width:892px;height:2px;background:#cfd5df;"></div>
<svg style="left:0;top:0" width="1282" height="718"><path d="M1119.5 83.5 L1124.5 83.5 L1122 80.8Z" fill="#a3a3a3"/><path d="M1119.5 671.8 L1124.5 671.8 L1122 674.5Z" fill="#505050"/></svg>
<svg style="left:0;top:0" width="1282" height="718"><path d="M359.6 203.8 L359.6 212.3 L361.6 210.4 L363.1 213.2 L364.4 212.5 L363 209.8 L365.5 209.7 Z" fill="#fff" stroke="#6c6c6c" stroke-width="0.95" stroke-linejoin="round"/></svg>
</div></body></html>
